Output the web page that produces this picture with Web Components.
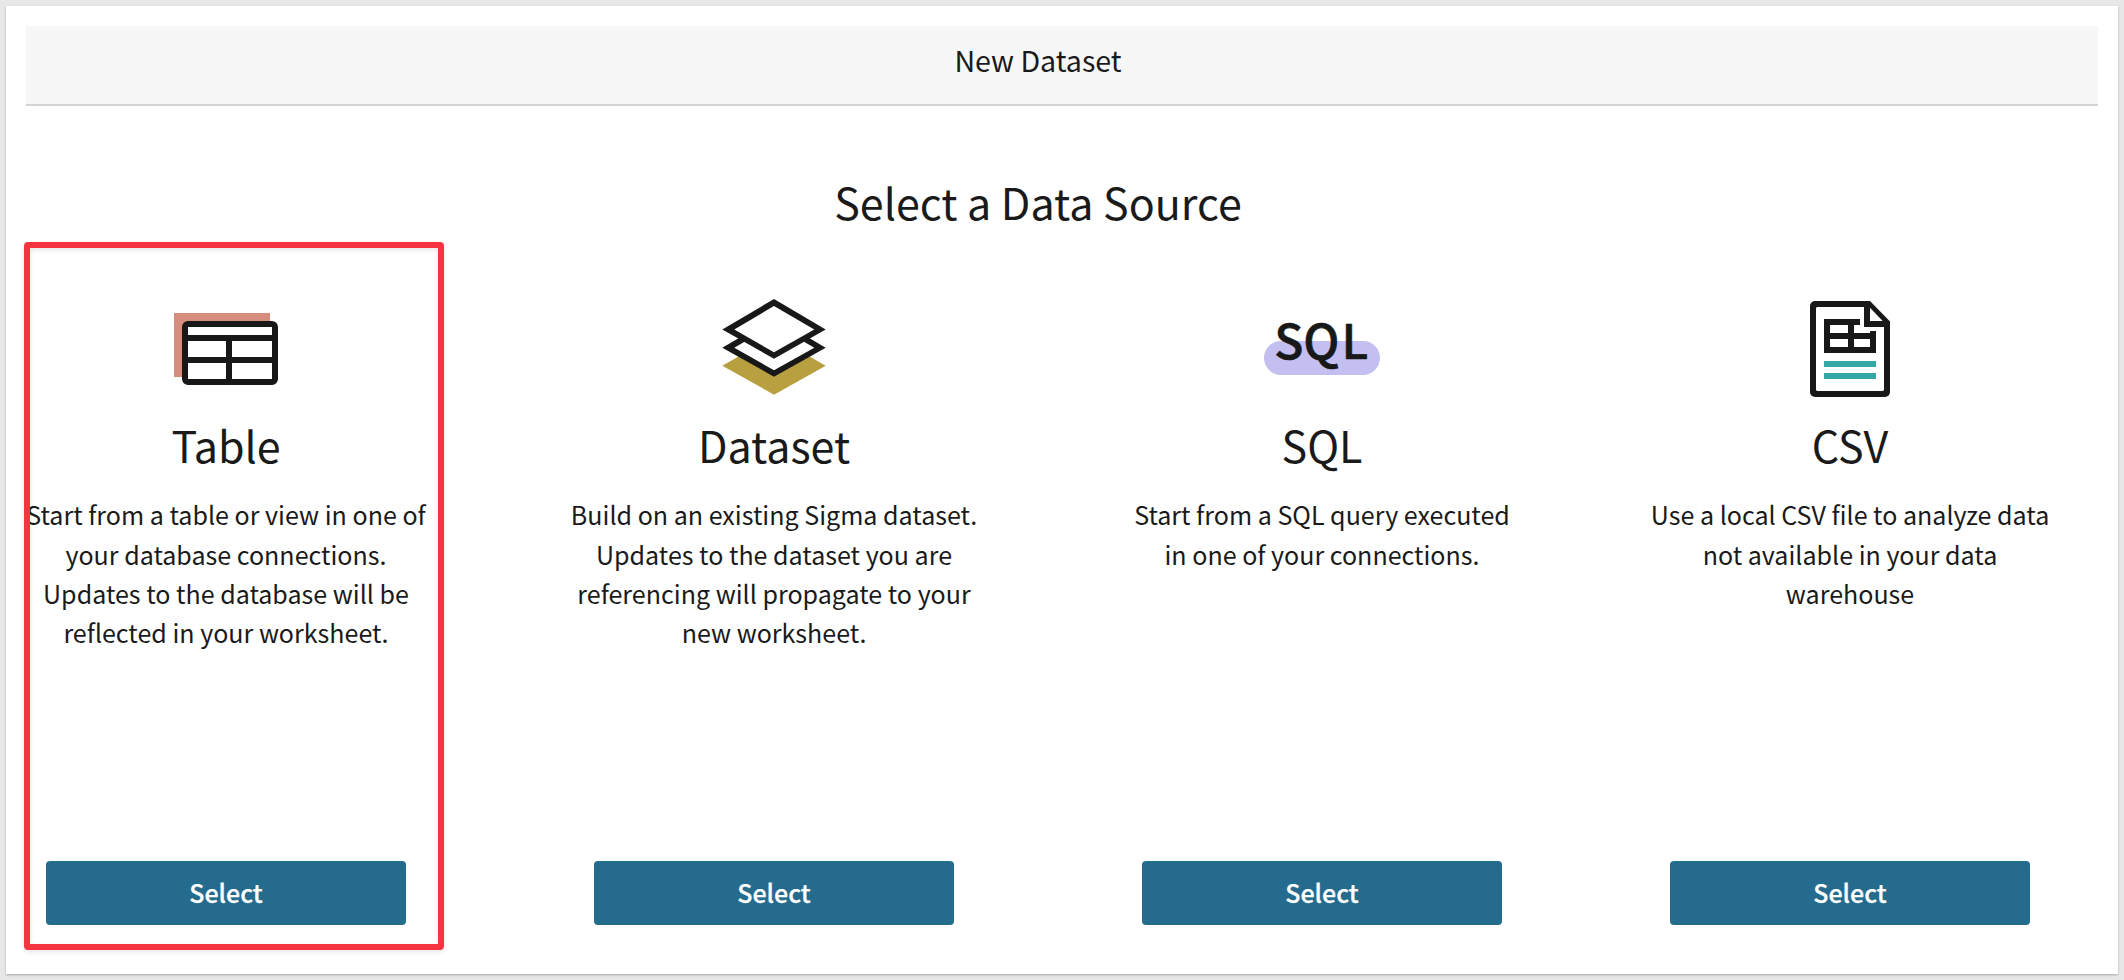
<!DOCTYPE html>
<html lang="en">
<head>
<meta charset="utf-8">
<title>New Dataset</title>
<style>
html,body{margin:0;height:100%;background:#e7e7e7;overflow:hidden}
body{font-family:"Noto Sans CJK SC","Source Sans Pro","Noto Sans",sans-serif;color:#1a1a1a}
</style>
</head>
<body>
<dataset-page>
  <page-header slot="header">New Dataset</page-header>
  <span slot="title">Select a Data Source</span>
  <source-card icon="table" selected><span slot="name">Table</span>Start from a table or view in one of<br>your database connections.<br>Updates to the database will be<br>reflected in your worksheet.</source-card>
  <source-card icon="dataset"><span slot="name">Dataset</span>Build on an existing Sigma dataset.<br>Updates to the dataset you are<br>referencing will propagate to your<br>new worksheet.</source-card>
  <source-card icon="sql"><span slot="name">SQL</span>Start from a SQL query executed<br>in one of your connections.</source-card>
  <source-card icon="csv"><span slot="name">CSV</span>Use a local CSV file to analyze data<br>not available in your data<br>warehouse</source-card>
</dataset-page>
<script>
class ShadowElement extends HTMLElement {
  connectedCallback() {
    if (!this.shadowRoot) this.attachShadow({ mode: 'open' }).innerHTML = this.render();
  }
}

customElements.define('dataset-page', class extends ShadowElement {
  render() {
    return `<style>
      :host{display:flex;flex-direction:column;box-sizing:border-box;width:2112px;height:968px;margin:6px;padding:20px;background:#fff;box-shadow:0 1px 2px rgba(0,0,0,.28)}
      h1{margin:63px 0 0;width:2024px;font-size:43px;line-height:64px;font-weight:400;text-align:center;white-space:nowrap}
      main{display:grid;grid-template-columns:548px 548px 528px 400px;margin-top:57px;height:635px}
    </style>
    <slot name="header"></slot><h1><slot name="title"></slot></h1><main><slot></slot></main>`;
  }
});

customElements.define('page-header', class extends ShadowElement {
  render() {
    return `<style>
      :host{display:flex;flex:none;align-items:center;justify-content:center;box-sizing:border-box;height:80px;padding:0 48px 11px 0;background:#f7f7f7;border-bottom:2px solid #d4d4d4;font-size:28.6px;line-height:40px}
    </style><slot></slot>`;
  }
});

customElements.define('select-button', class extends ShadowElement {
  render() {
    return `<style>
      :host{display:block;width:360px}
      button{display:block;width:100%;height:64px;margin:0;padding:0 0 2px;border:0;border-radius:4px;background:#256b8e;color:#fff;font:inherit;font-size:25px;font-weight:500;line-height:40px;-webkit-text-stroke:.25px #fff}
    </style><button type="button"><slot></slot></button>`;
  }
});

const ICONS = {
  table: `<path fill="#d68d7d" d="M8 17h96v64H8z"/><rect x="19" y="28" width="90" height="58" rx="3" fill="#fff" stroke="#181818" stroke-width="6"/><path fill="none" stroke="#181818" stroke-width="6" d="M19 42h90M19 64h90M63 42v44"/>`,
  dataset: `<path fill="#b89f40" d="M8.300 69.700 60 40l51.700 29.700L60 98.700z"/><path fill="#181818" d="M8.300 51.700 60 21.300l51.700 30.400L60 80.700z"/><path fill="#fff" d="M20.300 51.700 60 28.300l40.300 23.400L60 74.300z"/><path fill="#181818" d="M8.300 33.500 60 3l51.700 30.500L60 62.700z"/><path fill="#fff" d="M20.300 33.500 60 10l40.300 23.500L60 56.300z"/>`,
  sql: `<rect x="2" y="45" width="116" height="34" rx="17" fill="#c3bff1"/><text x="12.300 41.200 79.600" y="63" font-size="48" font-weight="500" fill="#181818" stroke="#181818" stroke-width=".6">SQL</text>`,
  csv: `<path fill="#181818" d="M25 5h55l20 20.500V96a5 5 0 0 1-5 5H25a5 5 0 0 1-5-5V10a5 5 0 0 1 5-5z"/><path fill="#fff" d="M27 11h47v20h20v63l-1 1H27l-1-1V12zM80 11.700V25h12.700z"/><path fill="#181818" d="M34 23h36v6h-6v8h16v-2h6v22H34zM40 29v8h18v-8zM40 43v8h18v-8zM64 43v8h16v-8z" fill-rule="evenodd"/><path fill="#34a8a5" d="M34 65h52v6H34zM34 77h52v6H34z"/>`
};

customElements.define('source-card', class extends ShadowElement {
  render() {
    return `<style>
      :host{display:flex;position:relative;flex-direction:column;align-items:center;width:400px;height:635px}
      svg{display:block;flex:none;width:120px;height:108px;margin-top:6px;overflow:visible;font-family:"Noto Sans CJK SC",sans-serif}
      h2{margin:8px 0 0;font-size:43px;line-height:64px;font-weight:400;white-space:nowrap}
      p{margin:19.300px 0 0;font-size:25.060px;line-height:39.200px;text-align:center;white-space:nowrap}
      select-button{margin-top:auto}
      .outline{position:absolute;left:-2px;top:-48px;width:420px;height:708px;box-sizing:border-box;border:6px solid #f63440;border-radius:4px;box-shadow:0 2px 5px rgba(0,0,0,.1),inset 0 2px 5px rgba(0,0,0,.1);pointer-events:none}
    </style>
    <svg viewBox="0 0 120 108">${ICONS[this.getAttribute('icon')]}</svg>
    <h2><slot name="name"></slot></h2><p><slot></slot></p>
    <select-button>Select</select-button>
    ${this.hasAttribute('selected') ? '<div class="outline"></div>' : ''}`;
  }
});
</script>
</body>
</html>
